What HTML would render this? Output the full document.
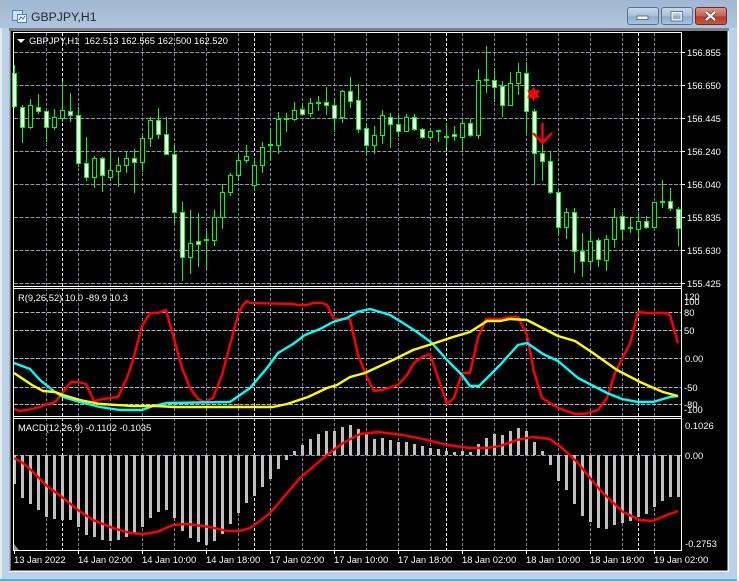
<!DOCTYPE html>
<html><head><meta charset="utf-8"><title>GBPJPY,H1</title>
<style>
html,body{margin:0;padding:0;width:739px;height:581px;overflow:hidden;background:#fff}
svg{display:block}
text{font-family:"Liberation Sans",sans-serif}
</style></head><body>
<svg width="739" height="581" viewBox="0 0 739 581" xmlns="http://www.w3.org/2000/svg">
<defs>
<linearGradient id="tb" x1="0" y1="0" x2="0" y2="1"><stop offset="0" stop-color="#9fb7d1"/><stop offset="1" stop-color="#aec5dc"/></linearGradient>
<linearGradient id="bn" x1="0" y1="0" x2="0" y2="1"><stop offset="0" stop-color="#c9d9e9"/><stop offset=".5" stop-color="#a9c1da"/><stop offset=".55" stop-color="#8fabc9"/><stop offset="1" stop-color="#a9c6e2"/></linearGradient>
<linearGradient id="cl" x1="0" y1="0" x2="0" y2="1"><stop offset="0" stop-color="#dc9a8e"/><stop offset=".5" stop-color="#c5604f"/><stop offset=".55" stop-color="#b23a2c"/><stop offset="1" stop-color="#c25a48"/></linearGradient>
</defs>
<rect width="737" height="581" fill="#b9d1ea"/>
<rect x="737" width="2" height="581" fill="#fff"/>
<rect width="737" height="28" fill="url(#tb)"/>
<rect width="2" height="581" x="0" y="28" fill="#e8e8e8"/>
<rect x="0" y="579" width="737" height="2" fill="#4fb6c6"/>
<rect x="9" y="28" width="720" height="544" fill="#f2f6fa"/>
<rect x="9" y="28" width="720" height="3" fill="#7f8285"/>
<rect x="9.5" y="28" width="2" height="543" fill="#6d7074"/>
<rect x="11" y="31" width="716.5" height="539.5" fill="#000"/>

<!-- title -->
<rect x="12.5" y="10.5" width="10" height="10" fill="#cfe2f6" stroke="#4f86c4"/>
<rect x="17.5" y="14.5" width="9" height="8" fill="#f4f8fc" stroke="#4f86c4"/>
<path d="M19 20l2-3 2 2 2-3" fill="none" stroke="#3a74b8"/>
<text x="31" y="21" font-size="12.2" fill="#1f2833">GBPJPY,H1</text>

<!-- window buttons -->
<rect x="627.5" y="7.5" width="31" height="17" rx="2.5" fill="url(#bn)" stroke="#5c728c"/>
<rect x="637" y="16" width="11" height="3.5" fill="#f2f2f2" stroke="#4a5a6c" stroke-width=".8"/>
<rect x="661.5" y="7.5" width="31" height="17" rx="2.5" fill="url(#bn)" stroke="#5c728c"/>
<rect x="672" y="12.5" width="9.5" height="7.5" fill="none" stroke="#f2f2f2" stroke-width="1.6"/>
<rect x="671" y="11.5" width="11.5" height="9.5" fill="none" stroke="#4a5a6c" stroke-width=".7"/>
<rect x="695.5" y="7.5" width="31" height="17" rx="2.5" fill="url(#cl)" stroke="#6b2c25"/>
<path d="M706 12l9 8M715 12l-9 8" stroke="#3f3f3f" stroke-width="3.6"/>
<path d="M706 12l9 8M715 12l-9 8" stroke="#f4f4f4" stroke-width="2.2"/>

<!-- grid -->
<g shape-rendering="crispEdges" fill="none" stroke-width="1">
<path stroke="#778899" stroke-dasharray="3 2" d="M46.5 33V550M78.5 33V550M110.5 33V550M142.5 33V550M174.5 33V550M206.5 33V550M238.5 33V550M270.5 33V550M302.5 33V550M334.5 33V550M366.5 33V550M398.5 33V550M430.5 33V550M462.5 33V550M494.5 33V550M526.5 33V550M558.5 33V550M590.5 33V550M622.5 33V550M654.5 33V550"/>
<path stroke="#fff" stroke-dasharray="3 2" d="M62.5 33V550M254.5 33V550M446.5 33V550M638.5 33V550"/>
<path stroke="#8a9aaa" stroke-dasharray="4 1.5" d="M14 52.5H681M14 85.5H681M14 118.5H681M14 151.5H681M14 184.5H681M14 217.5H681M14 250.5H681M14 283.5H681"/>
<path stroke="#aeb8c2" stroke-dasharray="4 1.5" d="M14 312.5H681M14 330.5H681M14 358.5H681M14 387.5H681M14 404.5H681"/>
<path stroke="#8a9aaa" stroke-dasharray="4 1.5" d="M14 455.5H681"/>
</g>

<!-- candles -->
<g shape-rendering="crispEdges">
<path fill="none" stroke="#0f0" d="M14.5 65V108M22.5 105V143M30.5 99V129M38.5 94V114M46.5 111V142M54.5 109V130M62.5 81V122M70.5 93V122M78.5 107V167M86.5 137V181M94.5 156V188M102.5 157V192M110.5 152V178M118.5 157V187M126.5 151V173M134.5 149V193M142.5 135V172M150.5 117V147M158.5 108V139M166.5 117V154M174.5 145V223M182.5 202V281M190.5 210V274M198.5 213V267M206.5 231V269M214.5 210V246M222.5 184V229M230.5 173V196M238.5 156V181M246.5 145V163M254.5 158V191M262.5 142V173M270.5 128V161M278.5 112V154M286.5 113V132M294.5 102V121M302.5 103V114M310.5 98V117M318.5 96V111M326.5 87V115M334.5 98V132M342.5 90V123M350.5 77V108M358.5 84V133M366.5 123V155M374.5 126V154M382.5 110V144M390.5 113V148M398.5 115V137M406.5 114V132M414.5 114V131M422.5 128V139M430.5 130V139M438.5 130V142M446.5 123V148M454.5 126V141M462.5 121V150M470.5 119V137M478.5 69V139M486.5 46V93M494.5 71V102M502.5 81V117M510.5 72V105M518.5 63V95M526.5 62V134M534.5 109V184M542.5 143V181M550.5 152V194M558.5 191V234M566.5 208V239M574.5 208V273M582.5 233V277M590.5 231V268M598.5 238V267M606.5 235V271M614.5 208V248M622.5 212V240M630.5 218V233M638.5 212V239M646.5 216V229M654.5 202V227M662.5 180V208M670.5 188V211M678.5 207V246"/>
<path fill="#fff" stroke="#0f0" d="M12.5 73.5h4V106.5h-4zM20.5 107.5h4V127.5h-4zM36.5 107.5h4V111.5h-4zM44.5 111.5h4V127.5h-4zM68.5 111.5h4V115.5h-4zM76.5 115.5h4V163.5h-4zM84.5 163.5h4V177.5h-4zM100.5 158.5h4V175.5h-4zM132.5 158.5h4V162.5h-4zM156.5 120.5h4V134.5h-4zM164.5 134.5h4V154.5h-4zM172.5 154.5h4V212.5h-4zM180.5 212.5h4V257.5h-4zM196.5 241.5h4V244.5h-4zM300.5 109.5h4V114.5h-4zM324.5 102.5h4V105.5h-4zM332.5 105.5h4V118.5h-4zM348.5 91.5h4V101.5h-4zM356.5 100.5h4V129.5h-4zM364.5 128.5h4V145.5h-4zM388.5 117.5h4V124.5h-4zM396.5 124.5h4V131.5h-4zM412.5 117.5h4V129.5h-4zM420.5 129.5h4V137.5h-4zM452.5 134.5h4V136.5h-4zM468.5 123.5h4V135.5h-4zM492.5 80.5h4V87.5h-4zM500.5 86.5h4V105.5h-4zM524.5 73.5h4V111.5h-4zM532.5 111.5h4V153.5h-4zM540.5 153.5h4V161.5h-4zM548.5 161.5h4V192.5h-4zM556.5 192.5h4V227.5h-4zM572.5 212.5h4V251.5h-4zM580.5 251.5h4V261.5h-4zM596.5 240.5h4V259.5h-4zM620.5 216.5h4V229.5h-4zM644.5 221.5h4V227.5h-4zM668.5 201.5h4V208.5h-4zM676.5 209.5h4V228.5h-4z"/>
<path fill="#000" stroke="#0f0" d="M28.5 105.5h4V127.5h-4zM52.5 117.5h4V127.5h-4zM60.5 110.5h4V118.5h-4zM92.5 158.5h4V177.5h-4zM108.5 170.5h4V177.5h-4zM116.5 165.5h4V171.5h-4zM124.5 158.5h4V165.5h-4zM140.5 138.5h4V162.5h-4zM148.5 120.5h4V138.5h-4zM188.5 243.5h4V257.5h-4zM212.5 217.5h4V240.5h-4zM220.5 192.5h4V217.5h-4zM228.5 175.5h4V192.5h-4zM236.5 160.5h4V175.5h-4zM244.5 156.5h4V160.5h-4zM252.5 165.5h4V185.5h-4zM260.5 147.5h4V165.5h-4zM276.5 119.5h4V145.5h-4zM292.5 110.5h4V119.5h-4zM308.5 103.5h4V113.5h-4zM340.5 91.5h4V117.5h-4zM372.5 135.5h4V145.5h-4zM380.5 115.5h4V135.5h-4zM404.5 117.5h4V131.5h-4zM428.5 131.5h4V137.5h-4zM460.5 123.5h4V137.5h-4zM476.5 80.5h4V135.5h-4zM508.5 83.5h4V105.5h-4zM516.5 72.5h4V83.5h-4zM564.5 212.5h4V227.5h-4zM588.5 241.5h4V261.5h-4zM604.5 239.5h4V260.5h-4zM612.5 217.5h4V239.5h-4zM636.5 221.5h4V229.5h-4zM652.5 202.5h4V227.5h-4z"/>
<path fill="none" stroke="#0f0" stroke-width="2" d="M204 240h5M268 145h5M284 119h5M316 103h5M436 131h5M444 137h5M484 80h5M628 228h5M660 202h5"/>
</g>

<!-- arrow and star -->
<path d="M542.5 123V142M533 133l9.5 10 9.5-10" fill="none" stroke="#f00" stroke-width="2.4"/>
<polygon fill="#f00" points="533.5,86.5 535.4,90.3 540,90.3 537.6,94 540,97.7 535.4,97.7 533.5,101.5 531.6,97.7 527,97.7 529.4,94 527,90.3 531.6,90.3"/>

<!-- RSI lines -->
<g fill="none" stroke-width="2.4" stroke-linejoin="round">
<polyline stroke="#f00" points="14,409 20,411 27,410 40,407 47,404 53,403 57,400 63,392 71,382 78,382 86,384 94,401 103,399 118,397 127,378 133,360 142,326 150,313 158,313 166,310 173,335 182,368 190,388 198,399 205,402 213,398 222,375 230,345 238,315 243,305 247,301 250,303 293,304 298,305 307,305 313,303 322,303 327,305 334,319 350,319 358,355 367,377 374,391 382,390 398,385 407,375 414,363 422,357 430,354 447,404 454,398 462,373 470,373 478,338 486,319 500,319 510,317 518,317 527,335 534,372 542,398 550,403 558,408 575,414 585,414 598,410 607,398 615,373 623,357 630,344 638,312 647,313 665,313 670,315 678,343"/>
<polyline stroke="#0ff" points="14,363 30,369 40,380 55,392 63,397 80,402 100,407 120,410 142,410 153,406 167,403 230,402 250,388 267,368 278,353 293,344 305,335 320,329 333,322 347,318 357,312 370,309 390,315 403,323 417,332 432,343 447,360 462,375 470,386 479,386 500,365 518,345 527,343 543,354 558,361 578,378 607,393 622,399 638,402 653,402 670,397 678,396"/>
<polyline stroke="#ff0" points="14,373 32,385 43,391 55,392 63,395 80,400 100,404 133,406 157,406 175,407 250,407 273,407 287,404 308,397 327,388 337,385 350,377 365,373 393,360 413,350 432,344 453,337 470,332 487,321 500,321 510,319 527,320 558,336 575,341 593,353 617,370 640,382 663,392 678,396"/>
</g>

<!-- MACD bars -->
<path shape-rendering="crispEdges" fill="none" stroke="#c0c0c0" stroke-width="3" d="M14.5 455V484M22.5 455V498M30.5 455V504M38.5 455V510M46.5 455V517M54.5 455V519M62.5 455V520M70.5 455V520M78.5 455V527M86.5 455V535M94.5 455V537M102.5 455V540M110.5 455V541M118.5 455V540M126.5 455V537M134.5 455V533M142.5 455V527M150.5 455V518M158.5 455V512M166.5 455V510M174.5 455V518M182.5 455V531M190.5 455V538M198.5 455V542M206.5 455V545M214.5 455V541M222.5 455V534M230.5 455V524M238.5 455V513M246.5 455V503M254.5 455V496M262.5 455V487M270.5 455V479M278.5 455V469M286.5 455V460M294.5 455V451M302.5 455V445M310.5 455V439M318.5 455V434M326.5 455V431M334.5 455V431M342.5 455V427M350.5 455V425M358.5 455V429M366.5 455V434M374.5 455V439M382.5 455V438M390.5 455V440M398.5 455V442M406.5 455V442M414.5 455V444M422.5 455V446M430.5 455V448M438.5 455V449M446.5 455V451M454.5 455V452M462.5 455V451M470.5 455V452M478.5 455V444M486.5 455V438M494.5 455V434M502.5 455V435M510.5 455V431M518.5 455V428M526.5 455V431M534.5 455V442M542.5 455V451M550.5 455V465M558.5 455V481M566.5 455V490M574.5 455V504M582.5 455V516M590.5 455V522M598.5 455V528M606.5 455V529M614.5 455V525M622.5 455V523M630.5 455V521M638.5 455V517M646.5 455V514M654.5 455V507M662.5 455V501M670.5 455V497M678.5 455V497"/>
<polyline fill="none" stroke="#f00" stroke-width="2.4" stroke-linejoin="round" points="14,458 23,463 33,472 47,486 62,497 78,510 93,520 113,528 130,533 143,534 157,532 173,525 187,524 210,527 227,531 240,531 250,528 260,521 270,513 283,498 300,478 327,455 343,443 360,434 378,432 403,435 423,439 447,445 470,448 487,448 500,446 517,440 533,437 550,439 562,448 577,462 600,490 623,512 640,520 653,521 667,515 678,511"/>
<polygon points="14,544 19,550 14,550" fill="#8a939c"/>

<!-- frames -->
<g shape-rendering="crispEdges" fill="none" stroke="#fff">
<path d="M13.5 32.5H681.5V550.5H13.5Z"/>
<path d="M14 286.5H681M14 288.5H681M14 416.5H681M14 418.5H681"/>
<path d="M682 52.5h3M682 85.5h3M682 118.5h3M682 151.5h3M682 184.5h3M682 217.5h3M682 250.5h3M682 283.5h3"/>
<path d="M14.5 550V554M78.5 550V554M142.5 550V554M206.5 550V554M270.5 550V554M334.5 550V554M398.5 550V554M462.5 550V554M526.5 550V554M590.5 550V554M654.5 550V554"/>
</g>

<!-- labels -->
<g fill="#f8fafc" font-size="9.4">
<path d="M17 39h8l-4 4z" fill="#fff"/>
<text x="29" y="44">GBPJPY,H1&#160;&#160;162.513 162.565 162.500 162.520</text>
<text x="687" y="56">156.855</text>
<text x="687" y="89">156.650</text>
<text x="687" y="122">156.445</text>
<text x="687" y="155">156.240</text>
<text x="687" y="188">156.040</text>
<text x="687" y="221">155.835</text>
<text x="687" y="254">155.630</text>
<text x="687" y="287">155.425</text>
<text x="684" y="300">120</text>
<text x="684" y="305">100</text>
<text x="684" y="316">80</text>
<text x="684" y="334">50</text>
<text x="685" y="362">0.00</text>
<text x="684" y="391">-50</text>
<text x="684" y="408">-80</text>
<text x="684" y="413">-100</text>
<text x="685" y="429">0.1026</text>
<text x="685" y="459">0.00</text>
<text x="685" y="547">-0.2753</text>
<text x="18" y="301">R(9,26,52) 10.0 -89.9 10.3</text>
<text x="18" y="431">MACD(12,26,9) -0.1102 -0.1035</text>
<text x="14" y="563">13 Jan 2022</text>
<text x="78" y="563">14 Jan 02:00</text>
<text x="142" y="563">14 Jan 10:00</text>
<text x="206" y="563">14 Jan 18:00</text>
<text x="270" y="563">17 Jan 02:00</text>
<text x="334" y="563">17 Jan 10:00</text>
<text x="398" y="563">17 Jan 18:00</text>
<text x="462" y="563">18 Jan 02:00</text>
<text x="526" y="563">18 Jan 10:00</text>
<text x="590" y="563">18 Jan 18:00</text>
<text x="654" y="563">19 Jan 02:00</text>
</g>
</svg>
</body></html>
